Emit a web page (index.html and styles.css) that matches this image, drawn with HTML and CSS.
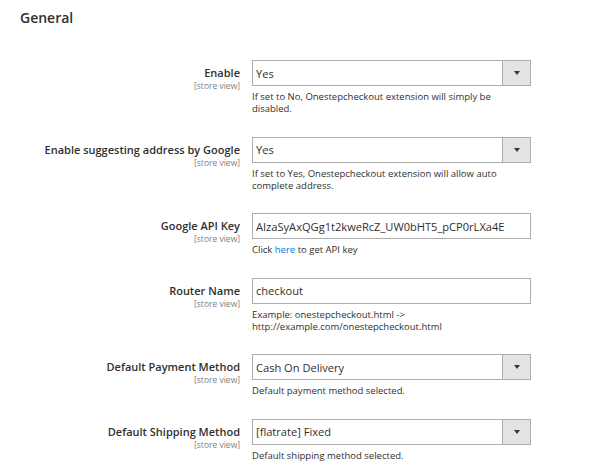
FILE: index.html
```html
<!DOCTYPE html>
<html>
<head>
<meta charset="utf-8">
<link rel="stylesheet" href="styles.css">
</head>
<body>
<div class="page">
  <h2 class="title">General</h2>
  <div class="form">
    <div class="row">
      <div class="label"><span class="name">Enable</span><span class="scope">[store view]</span></div>
      <div class="control">
        <div class="select"><span class="value">Yes</span><span class="btn"><span class="arrow"></span></span></div>
        <div class="note">If set to No, Onestepcheckout extension will simply be disabled.</div>
      </div>
    </div>
    <div class="row">
      <div class="label"><span class="name">Enable suggesting address by Google</span><span class="scope">[store view]</span></div>
      <div class="control">
        <div class="select"><span class="value">Yes</span><span class="btn"><span class="arrow"></span></span></div>
        <div class="note">If set to Yes, Onestepcheckout extension will allow auto complete address.</div>
      </div>
    </div>
    <div class="row">
      <div class="label"><span class="name">Google API Key</span><span class="scope">[store view]</span></div>
      <div class="control">
        <div class="input"><span class="value">AIzaSyAxQGg1t2kweRcZ_UW0bHT5_pCP0rLXa4E</span></div>
        <div class="note">Click <a class="link" href="#">here</a> to get API key</div>
      </div>
    </div>
    <div class="row">
      <div class="label"><span class="name">Router Name</span><span class="scope">[store view]</span></div>
      <div class="control">
        <div class="input"><span class="value">checkout</span></div>
        <div class="note">Example: onestepcheckout.html -&gt;<br>http://example.com/onestepcheckout.html</div>
      </div>
    </div>
    <div class="row">
      <div class="label"><span class="name">Default Payment Method</span><span class="scope">[store view]</span></div>
      <div class="control">
        <div class="select"><span class="value">Cash On Delivery</span><span class="btn"><span class="arrow"></span></span></div>
        <div class="note">Default payment method selected.</div>
      </div>
    </div>
    <div class="row">
      <div class="label"><span class="name">Default Shipping Method</span><span class="scope">[store view]</span></div>
      <div class="control">
        <div class="select"><span class="value">[flatrate] Fixed</span><span class="btn"><span class="arrow"></span></span></div>
        <div class="note">Default shipping method selected.</div>
      </div>
    </div>
  </div>
</div>
</body>
</html>
```

FILE: styles.css
```css
html, body {
  margin: 0;
  padding: 0;
  background: #ffffff;
}
body {
  font-family: "Open Sans", "Liberation Sans", sans-serif;
  color: #303030;
}
.page {
  padding: 8px 0 0 0;
}
.title {
  margin: 0 0 33px 20px;
  font-size: 14px;
  line-height: 19px;
  font-weight: 600;
  color: #303030;
}
.form {
  display: flex;
  flex-direction: column;
  gap: 21.5px;
}
.row {
  display: grid;
  grid-template-columns: 240px 279px;
  column-gap: 12px;
}
.label {
  display: flex;
  flex-direction: column;
  align-items: flex-end;
  text-align: right;
  padding-top: 5px;
}
.name {
  font-size: 11px;
  line-height: 16px;
  font-weight: 600;
  color: #303030;
}
.scope {
  font-size: 8.5px;
  line-height: 10px;
  color: #808080;
}
.control {
  display: flex;
  flex-direction: column;
}
.select, .input {
  box-sizing: border-box;
  height: 26px;
  border: 1px solid #adadad;
  display: flex;
  align-items: center;
  background: #fff;
}
.value {
  flex: 1;
  padding-left: 3px;
  font-size: 11.1px;
  color: #303030;
  white-space: nowrap;
}
.btn {
  width: 27px;
  align-self: stretch;
  background: #e3e3e3;
  border-left: 1px solid #adadad;
  display: flex;
  align-items: center;
  justify-content: center;
}
.arrow {
  width: 0;
  height: 0;
  border-left: 3px solid transparent;
  border-right: 3px solid transparent;
  border-top: 4px solid #41362f;
}
.note {
  margin-top: 5px;
  font-size: 9.5px;
  line-height: 12px;
  color: #303030;
  padding-right: 20px;
}
.link {
  color: #007bdb;
  text-decoration: none;
}
```
